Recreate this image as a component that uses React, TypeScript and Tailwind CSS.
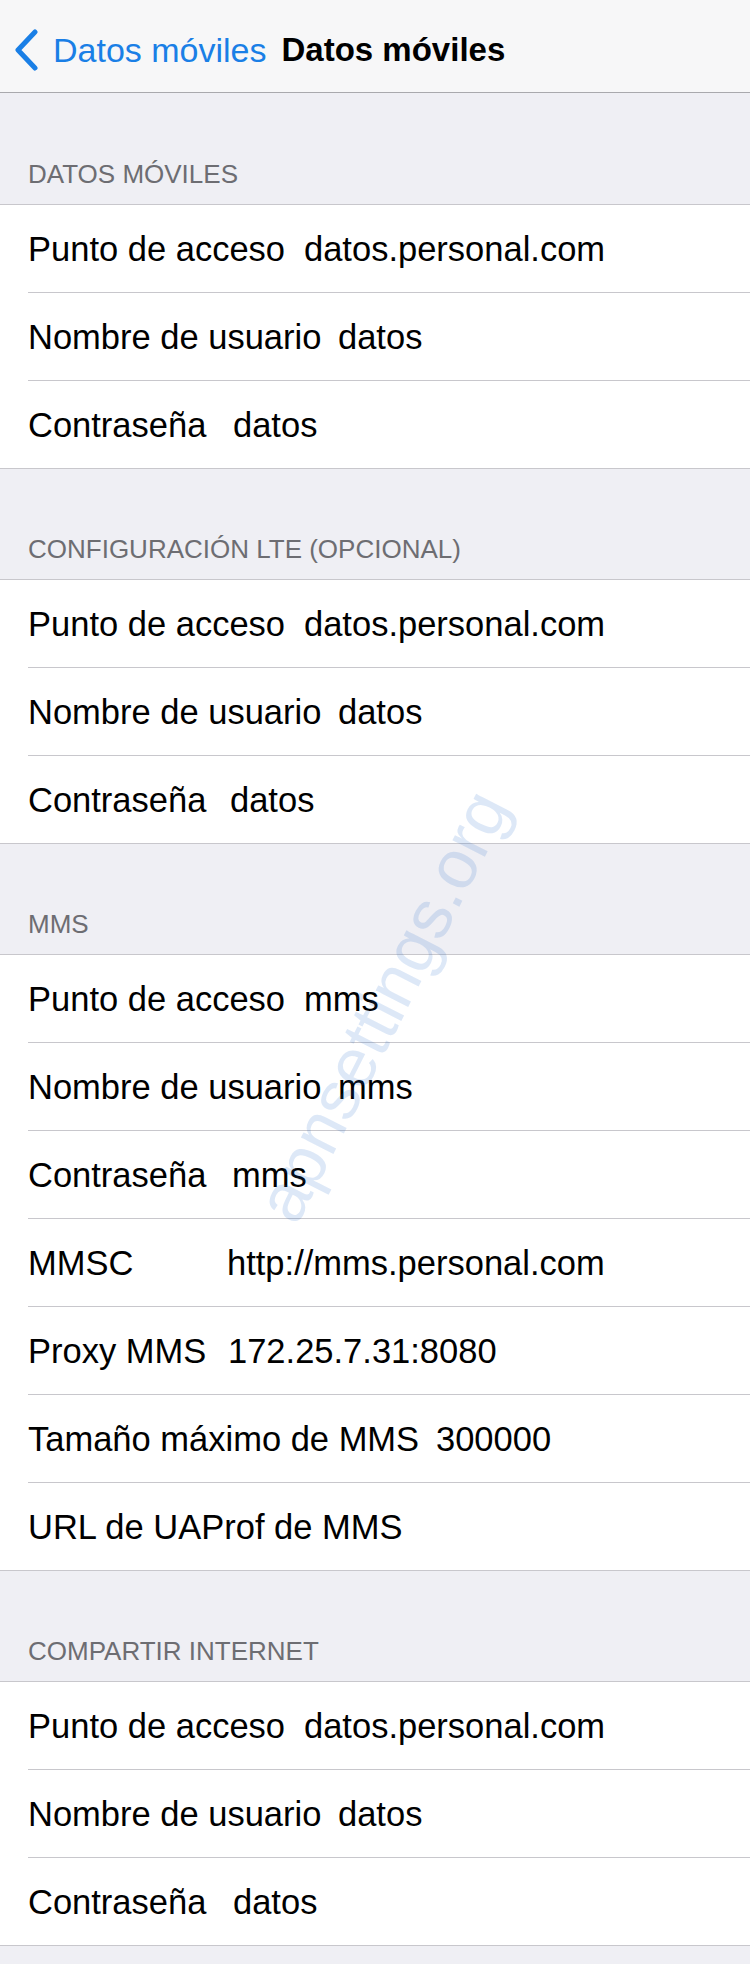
import React from "react";

type Row = { label: string; value?: string; w: string };

const sections: { title: string; first?: boolean; rows: Row[] }[] = [
  {
    title: "DATOS MÓVILES",
    first: true,
    rows: [
      { label: "Punto de acceso", value: "datos.personal.com", w: "w-[276px]" },
      { label: "Nombre de usuario", value: "datos", w: "w-[310px]" },
      { label: "Contraseña", value: "datos", w: "w-[205px]" },
    ],
  },
  {
    title: "CONFIGURACIÓN LTE (OPCIONAL)",
    rows: [
      { label: "Punto de acceso", value: "datos.personal.com", w: "w-[276px]" },
      { label: "Nombre de usuario", value: "datos", w: "w-[310px]" },
      { label: "Contraseña", value: "datos", w: "w-[202px]" },
    ],
  },
  {
    title: "MMS",
    rows: [
      { label: "Punto de acceso", value: "mms", w: "w-[276px]" },
      { label: "Nombre de usuario", value: "mms", w: "w-[310px]" },
      { label: "Contraseña", value: "mms", w: "w-[204px]" },
      { label: "MMSC", value: "http://mms.personal.com", w: "w-[199px]" },
      { label: "Proxy MMS", value: "172.25.7.31:8080", w: "w-[200px]" },
      { label: "Tamaño máximo de MMS", value: "300000", w: "w-[408px]" },
      { label: "URL de UAProf de MMS", w: "w-[408px]" },
    ],
  },
  {
    title: "COMPARTIR INTERNET",
    rows: [
      { label: "Punto de acceso", value: "datos.personal.com", w: "w-[276px]" },
      { label: "Nombre de usuario", value: "datos", w: "w-[310px]" },
      { label: "Contraseña", value: "datos", w: "w-[205px]" },
    ],
  },
];

export default function App() {
  return (
    <div className="relative w-[750px] min-h-[1964px] overflow-hidden bg-[#efeff4] font-['Liberation_Sans',Arial,sans-serif] text-black">
      {/* Nav bar */}
      <div className="flex h-[93px] items-center border-b border-[#a9a9ad] bg-[#f7f7f8] pt-[8px]">
        <svg width="24" height="42" viewBox="0 0 24 42" className="ml-[14px] mr-[15px]">
          <path d="M21 3 L4 21 L21 39" fill="none" stroke="#1a7fe6" strokeWidth="5" strokeLinecap="round" strokeLinejoin="round" />
        </svg>
        <span className="text-[34px] leading-[40px] text-[#1a7fe6]">Datos móviles</span>
        <span className="ml-[15px] text-[33px] font-bold leading-[40px]">Datos móviles</span>
      </div>

      {sections.map((s) => (
        <div key={s.title}>
          <div className={`flex items-end px-[28px] pb-[16px] ${s.first ? "h-[111px]" : "h-[110px]"}`}>
            <span className="text-[26px] leading-[28px] text-[#6d6d72]">{s.title}</span>
          </div>
          <div className="border-y border-[#c8c7cc] bg-white pl-[28px]">
            {s.rows.map((r, i) => (
              <div
                key={r.label + i}
                className={`flex h-[87px] items-center text-[34.5px] leading-[40px] ${i < s.rows.length - 1 ? "box-content border-b border-[#c8c7cc]" : ""}`}
              >
                <span className={`${r.w} shrink-0 whitespace-nowrap`}>{r.label}</span>
                {r.value && <span className="whitespace-nowrap">{r.value}</span>}
              </div>
            ))}
          </div>
        </div>
      ))}

      {/* Watermark */}
      <div className="pointer-events-none absolute left-[383px] top-[1006px] -translate-x-1/2 -translate-y-1/2 -rotate-[63deg] whitespace-nowrap text-[69px] leading-[76px] text-[#1e64c8]/15">
        apnsettings.org
      </div>
    </div>
  );
}
